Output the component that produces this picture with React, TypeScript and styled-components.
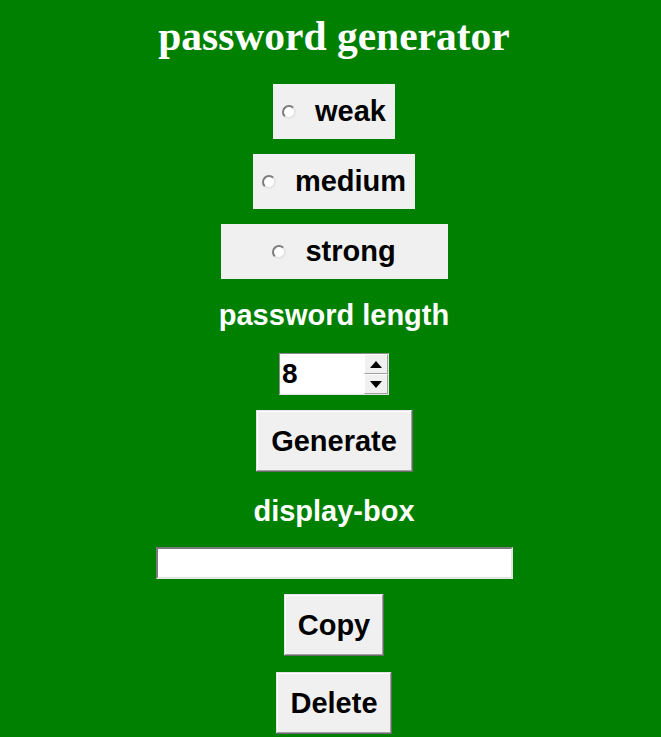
import React, { useState } from "react";
import styled, { createGlobalStyle } from "styled-components";

const GlobalStyle = createGlobalStyle`
  html, body {
    margin: 0;
    padding: 0;
    background: #008000;
  }
`;

const Page = styled.div`
  min-height: 737px;
  padding-left: 7px;
  background: #008000;
  display: flex;
  flex-direction: column;
  align-items: center;
  font-family: "Liberation Sans", Arial, sans-serif;
`;

const Title = styled.h1`
  margin: 11px 0 0;
  height: 50px;
  line-height: 50px;
  font-family: "Liberation Serif", "Times New Roman", serif;
  font-size: 41.5px;
  font-weight: bold;
  color: #ffffff;
`;

const RadioRow = styled.label<{ $width?: number; $top: number }>`
  margin-top: ${(p) => p.$top}px;
  height: 55px;
  width: ${(p) => (p.$width ? `${p.$width}px` : "auto")};
  padding: 0 9px;
  box-sizing: border-box;
  background: #f0f0f0;
  display: flex;
  align-items: center;
  justify-content: center;
  gap: 19px;
  cursor: pointer;
  font-size: 29px;
  font-weight: bold;
  color: #000;
`;

const RadioDot = styled.span<{ $checked: boolean }>`
  width: 14px;
  height: 14px;
  box-sizing: border-box;
  border-radius: 50%;
  border: 2px solid;
  border-color: #7c7c7c #e4e4e4 #e4e4e4 #7c7c7c;
  background: #ffffff;
  display: flex;
  align-items: center;
  justify-content: center;
  &::after {
    content: "";
    width: 4px;
    height: 4px;
    border-radius: 50%;
    background: ${(p) => (p.$checked ? "#000" : "transparent")};
  }
`;

const Label = styled.div<{ $top: number }>`
  margin-top: ${(p) => p.$top}px;
  height: 34px;
  line-height: 34px;
  font-size: 29px;
  font-weight: bold;
  color: #ffffff;
`;

const Spin = styled.div`
  margin-top: 21px;
  width: 110px;
  height: 42px;
  box-sizing: border-box;
  border: 1px solid;
  border-color: #8c8c8c #e3e3e3 #e3e3e3 #8c8c8c;
  background: #ffffff;
  display: flex;
`;

const SpinValue = styled.div`
  flex: 1;
  padding-left: 2px;
  font-size: 28px;
  font-weight: bold;
  line-height: 40px;
  color: #000;
`;

const SpinArrows = styled.div`
  width: 24px;
  display: flex;
  flex-direction: column;
`;

const SpinArrow = styled.div`
  flex: 1;
  background: #f0f0f0;
  box-sizing: border-box;
  border: 1px solid;
  border-color: #ffffff #a0a0a0 #a0a0a0 #ffffff;
  display: flex;
  align-items: center;
  justify-content: center;
`;

const Button = styled.button<{ $top: number; $width?: number }>`
  margin-top: ${(p) => p.$top}px;
  height: 62px;
  width: ${(p) => (p.$width ? `${p.$width}px` : "auto")};
  padding: 0 14px;
  box-sizing: border-box;
  background: #f0f0f0;
  border: 0;
  box-shadow: inset -1px -1px #696969, inset 1px 1px #e3e3e3,
    inset -2px -2px #a0a0a0, inset 2px 2px #ffffff;
  font-family: "Liberation Sans", Arial, sans-serif;
  font-size: 29px;
  font-weight: bold;
  color: #000;
  cursor: pointer;
`;

const Entry = styled.input`
  margin-top: 19px;
  width: 357px;
  height: 32px;
  box-sizing: border-box;
  border: 2px solid;
  border-color: #7a7a7a #e3e3e3 #e3e3e3 #7a7a7a;
  background: #ffffff;
  outline: none;
  font-family: "Liberation Sans", Arial, sans-serif;
  font-size: 18px;
  padding: 0 2px;
`;

const levels = [
  { key: "weak", width: 0, top: 23 },
  { key: "medium", width: 0, top: 15 },
  { key: "strong", width: 227, top: 15 },
];

export default function App() {
  const [level, setLevel] = useState("");
  const [length, setLength] = useState(8);
  const [pwd, setPwd] = useState("");

  const generate = () => {
    const pools: Record<string, string> = {
      weak: "abcdefghijklmnopqrstuvwxyz",
      medium: "abcdefghijklmnopqrstuvwxyzABCDEFGHIJKLMNOPQRSTUVWXYZ",
      strong:
        "abcdefghijklmnopqrstuvwxyzABCDEFGHIJKLMNOPQRSTUVWXYZ0123456789!@#$%^&*()",
    };
    const pool = pools[level] || pools.weak;
    let out = "";
    for (let i = 0; i < length; i++) out += pool[Math.floor(Math.random() * pool.length)];
    setPwd(out);
  };

  return (
    <Page>
      <GlobalStyle />
      <Title>password generator</Title>
      {levels.map((l) => (
        <RadioRow
          key={l.key}
          $top={l.top}
          $width={l.width || undefined}
          onClick={() => setLevel(l.key)}
        >
          <RadioDot $checked={level === l.key} />
          <span>{l.key}</span>
        </RadioRow>
      ))}
      <Label $top={19}>password length</Label>
      <Spin>
        <SpinValue>{length}</SpinValue>
        <SpinArrows>
          <SpinArrow onClick={() => setLength((n) => n + 1)}>
            <svg width="12" height="7" viewBox="0 0 12 7">
              <path d="M0 7 L6 0 L12 7 Z" fill="#000" />
            </svg>
          </SpinArrow>
          <SpinArrow onClick={() => setLength((n) => Math.max(1, n - 1))}>
            <svg width="12" height="7" viewBox="0 0 12 7">
              <path d="M0 0 L12 0 L6 7 Z" fill="#000" />
            </svg>
          </SpinArrow>
        </SpinArrows>
      </Spin>
      <Button $top={15} $width={157} onClick={generate}>
        Generate
      </Button>
      <Label $top={22}>display-box</Label>
      <Entry value={pwd} onChange={(e) => setPwd(e.target.value)} />
      <Button $top={15} onClick={() => navigator.clipboard?.writeText(pwd)}>
        Copy
      </Button>
      <Button $top={16} onClick={() => setPwd("")}>
        Delete
      </Button>
    </Page>
  );
}
